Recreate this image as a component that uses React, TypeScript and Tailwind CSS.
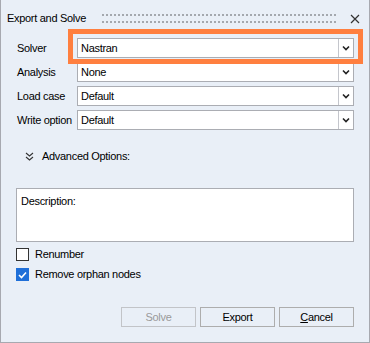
import React from "react";

const font = { fontFamily: '"Liberation Sans", Arial, sans-serif' };

function Chevron() {
  return (
    <svg width="8" height="6" viewBox="0 0 8 6">
      <polyline points="1,1.5 4,4.5 7,1.5" fill="none" stroke="#222" strokeWidth="1.6" />
    </svg>
  );
}

function Select({ value }: { value: string }) {
  return (
    <div className="flex h-[20px] flex-1 border border-[#abadb3] bg-white">
      <div className="flex flex-1 items-center pl-[3px] text-[11px] text-black">{value}</div>
      <div className="flex w-[15px] items-center justify-center border-l border-[#c4c6cc] bg-white">
        <Chevron />
      </div>
    </div>
  );
}

function Row({ label, value }: { label: string; value: string }) {
  return (
    <div className="flex h-[20px] items-center">
      <div className="w-[61px] pl-[1px] text-[11px] text-black">{label}</div>
      <Select value={value} />
    </div>
  );
}

function Btn({ children, disabled }: { children: React.ReactNode; disabled?: boolean }) {
  return (
    <div
      className={
        "flex h-[20px] w-[75px] items-center justify-center border bg-[#e9eff7] text-[11px] " +
        (disabled ? "border-[#c2c4c8] text-[#9a9a9a]" : "border-[#adadad] text-black")
      }
    >
      {children}
    </div>
  );
}

export default function App() {
  return (
    <div
      className="relative flex h-[343px] w-[370px] flex-col border-x border-b border-[#a7a9b0] bg-[#e9eff7] tracking-[-0.3px]"
      style={font}
    >
      {/* title bar */}
      <div className="flex h-[38px] items-start pt-[11px]">
        <div className="w-[96px] pl-[6px] text-[11px] leading-[14px] text-black">Export and Solve</div>
        <svg width="234" height="10" className="mt-[3px] ml-[5px]">
          <defs>
            <pattern id="dots" width="4" height="7" patternUnits="userSpaceOnUse">
              <rect x="0" y="0" width="2" height="2" fill="#a4a8ae" />
            </pattern>
          </defs>
          <rect x="0" y="0" width="234" height="9" fill="url(#dots)" />
        </svg>
        <div className="flex flex-1 justify-end pr-[9px] pt-[3px]">
          <svg width="10" height="10" viewBox="0 0 10 10">
            <path d="M1 1 L9 9 M9 1 L1 9" stroke="#333" strokeWidth="1.2" />
          </svg>
        </div>
      </div>

      <div className="flex flex-col gap-[4px] px-[15px]">
        <Row label="Solver" value="Nastran" />
        <Row label="Analysis" value="None" />
        <Row label="Load case" value="Default" />
        <Row label="Write option" value="Default" />
      </div>

      <div className="mt-[17px] flex h-[18px] items-center pl-[24px]">
        <svg width="9" height="9" viewBox="0 0 9 9">
          <polyline points="1,1 4.5,4 8,1" fill="none" stroke="#333" strokeWidth="1.1" />
          <polyline points="1,5 4.5,8 8,5" fill="none" stroke="#333" strokeWidth="1.1" />
        </svg>
        <div className="ml-[8px] text-[11px] text-black">Advanced Options:</div>
      </div>

      <div className="mx-[15px] mt-[23px] h-[54px] border border-[#abadb3] bg-white px-[4px] pt-[5px] text-[11px] leading-[14px] text-black">
        Description:
      </div>

      <div className="mt-[6px] flex flex-col gap-[7px] px-[15px]">
        <div className="flex h-[13px] items-center">
          <div className="h-[13px] w-[13px] border border-[#333] bg-white" />
          <div className="ml-[6px] text-[11px] text-black">Renumber</div>
        </div>
        <div className="flex h-[13px] items-center">
          <div className="flex h-[13px] w-[13px] items-center justify-center bg-[#1f6fd8]">
            <svg width="9" height="8" viewBox="0 0 9 8">
              <polyline points="1,4 3.5,6.5 8,1.5" fill="none" stroke="#fff" strokeWidth="1.6" />
            </svg>
          </div>
          <div className="ml-[6px] text-[11px] text-black">Remove orphan nodes</div>
        </div>
      </div>

      <div className="mt-[26px] flex justify-end gap-[4px] pr-[15px]">
        <Btn disabled>Solve</Btn>
        <Btn>Export</Btn>
        <Btn>
          <span>
            <span className="underline">C</span>ancel
          </span>
        </Btn>
      </div>

      {/* highlight annotation */}
      <div className="absolute left-[67px] top-[29px] h-[35px] w-[295px] border-[5px] border-[#ff7f3f]" />
    </div>
  );
}
